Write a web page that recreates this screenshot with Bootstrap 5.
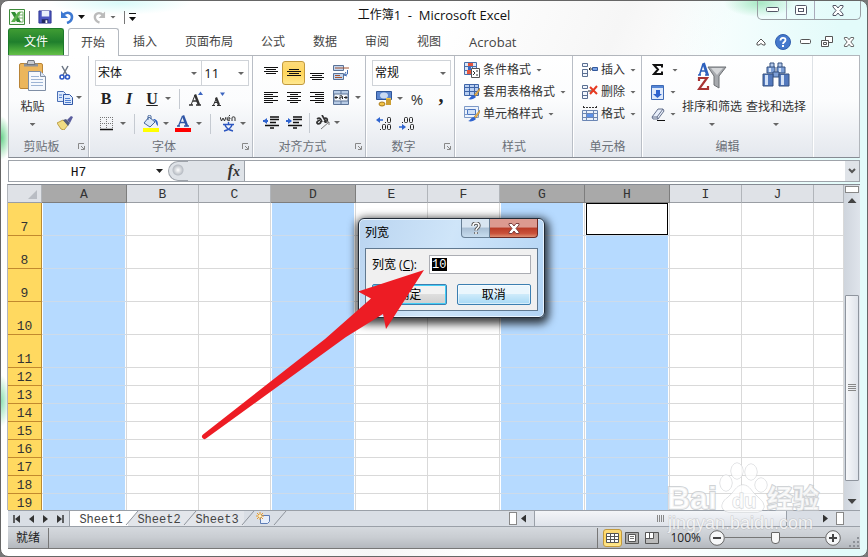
<!DOCTYPE html>
<html lang="zh-CN">
<head>
<meta charset="utf-8">
<meta name="viewport" content="width=device-width, initial-scale=1">
<title>工作簿1 - Microsoft Excel</title>
<link rel="stylesheet" href="https://cdn.jsdelivr.net/npm/bootstrap@5.3.0/dist/css/bootstrap.min.css">
<style>
body{background:#777;font:12px/16px "Open Sans","Noto Sans CJK SC",sans-serif;color:#333;min-height:100vh}
button,select,input{font:inherit;color:inherit}
button{background:none;border:0;padding:0}
svg{display:block;flex:none}
.win{height:100vh;min-height:420px;border:1px solid #666;border-radius:8px;padding:0 7px 7px;overflow:hidden;
  background:radial-gradient(ellipse 70px 12px at 120px 2px,#d9faf9,transparent),
  radial-gradient(ellipse 36px 14px at calc(100% - 107px) 2px,#a8e8c4,transparent),
  radial-gradient(ellipse 10px 22px at 0 137px,#67d18a,transparent),
  radial-gradient(ellipse 9px 26px at 0 400px,#8de0b2,transparent),
  linear-gradient(90deg,transparent 76%,#e3fbfa 97%),linear-gradient(115deg,#fff 40%,#f6f6f6 56%,#fff 66%)}
.lat{font-size:13px}
.titlebar{display:grid;grid-template-columns:1fr auto 1fr;height:27px;color:#111}
.quick{gap:4px;padding:4px 0 0 1px}
.tri{display:inline-block;flex:none;width:6px;height:3px;background:#666;clip-path:polygon(0 0,100% 0,50% 100%)}
.tri-dark{width:7px;height:4px;background:#111}
.vsep{width:1px;height:13px;background:#777;flex:none}
.vsoft{width:1px;height:20px;background:#c5cad1;flex:none}
.capbtns{border:1px solid #999fa3;border-top:0;border-radius:0 0 5px 5px;height:19px;margin-right:-1px}
.capbtns button{width:28px;display:flex;align-items:center;justify-content:center}
.capbtns button+button{border-left:1px solid #aab}
.capbtns button:last-child{width:46px}
.tabs{height:27px}
.tabs a{color:#444;padding:0 14px;display:flex;align-items:center;height:27px;text-decoration:none}
.tabs .file{width:56px;padding:0 0 0 15px;margin-right:4px;color:#fff;border:1px solid #1d7a2c;border-bottom:0;border-radius:3px 3px 0 0;background:linear-gradient(#3f9c33,#1f7f2d 50%,#47a83a 80%,#64bf48)}
.tabs .open{width:51px;padding:0 0 0 12px;background:#fff;border:1px solid #b4b9c0;border-bottom:0;border-radius:3px 3px 0 0;height:28px;position:relative}
.tabtools button{width:22px;display:flex;justify-content:center}
.ribbon{height:103px;border:1px solid #b2b6bc;border-bottom:1px solid #868b93;background:linear-gradient(#fff,#fbfcfd 45%,#e9ecf1 88%,#e3e8ee)}
.grp{display:flex;flex-direction:column;border-right:1px solid #b9bec6;box-shadow:1px 0 #fff;margin-right:1px;flex:none;padding:4px 3px 0 5px}
.grp.lists{padding:4px 0 0 8px}
.grp.lists>.cap{padding-right:8px}
.grp>.body{height:76px}
.grp>.cap{color:#6b7078;display:flex;justify-content:center;align-items:center;height:21px;position:relative}
.grp>.cap svg{position:absolute;right:0;top:7px}
.ib{display:flex;align-items:center;justify-content:center;flex:none;height:24px}
.w8{width:8px}.w10{width:10px}.w12{width:12px}.w14{width:14px}.w20{width:20px}.w22{width:22px}.w23{width:23px}.w24{width:24px}.w26{width:26px}
.row3{display:flex;align-items:center;height:25px}
.box{appearance:none;border:1px solid #cfd3d8;background:#fff url("data:image/svg+xml,%3Csvg xmlns='http://www.w3.org/2000/svg' width='6' height='3'%3E%3Cpath d='M0 0h6L3 3z' fill='%23666'/%3E%3C/svg%3E") no-repeat right 4px center;height:26px;border-radius:0;padding:0 2px;color:#111}
.on{background:linear-gradient(#fddb7b,#ffd65c 50%,#ffe88f);border:1px solid #c29a3d;border-radius:3px}
.stack{margin-top:-1px}
.cmd{display:flex;align-items:center;height:22px;gap:3px;white-space:nowrap}
.cmd .tri{margin-left:2px}
.gly{font-family:"Liberation Serif",serif;font-weight:700;color:#222;line-height:16px}
.pct{font-size:15px}
.big{display:flex;flex-direction:column;align-items:center;white-space:nowrap}
.paste{padding:0 8px 0 5px}
.fbar{height:22px;margin:2px 0;border:1px solid #9ea3aa;background:#dfe3e8}
.fbar input{border:0;background:#fff;outline:0;font:13px "Liberation Mono",monospace;color:#111;border-radius:0}
.fbar .namebox{width:159px;padding:2px 20px 0 0;text-align:center;background:#fff url("data:image/svg+xml,%3Csvg xmlns='http://www.w3.org/2000/svg' width='7' height='4'%3E%3Cpath d='M0 0h7L3.5 4z' fill='%23222'/%3E%3C/svg%3E") no-repeat right 5px center}
.fx{width:77px;border-right:1px solid #9ea3aa;background:linear-gradient(90deg,#fff 10px,transparent 10px)}
.fx .knob{width:20px;height:20px;border:1px solid #9ea3aa;border-right:0;border-radius:10px 0 0 10px;background:radial-gradient(circle at 9px 8px,#fff 0,#b9bec5 5px,#dfe3e8 6px)}
.fx i{font:italic 700 16px "Liberation Serif",serif}
.sheet{border-top:1px solid #868b93;border-left:1px solid #b2b6bc;margin-left:-1px;background:#fff;flex:1 1 0;min-height:0;overflow:hidden}
.cells{flex:1 1 0;min-width:0;overflow:hidden}
.cells table{table-layout:fixed;border-collapse:separate;border-spacing:0;width:100%;min-width:820px;font:13px/14px "Liberation Mono",monospace}
.cells thead th{height:18px;padding:2px 0 0;border-right:1px solid #b1b5ba;border-bottom:1px solid #9a9ea4;background:#dfe2e7;font-weight:400;text-align:center;vertical-align:bottom}
.cells thead th.sel{background:#a9a9a9;border-color:#7d7d7d}
.cells tbody th{background:#ffd960;border-right:1px solid #b98a35;border-bottom:1px solid #c2892e;padding:2px 0 0;font-weight:400;text-align:center;vertical-align:bottom}
.cells td{padding:0 1px;border-right:1px solid #d9d9d9;border-bottom:1px solid #d9d9d9}
.cells td.sel{background:#b6daff;border-bottom-color:#cddbea;box-shadow:inset 1px 0 #fff,inset -1px 0 #fff}
.tall{height:33px}.short{height:18px}
.active-cell{height:32px;border:1px solid #000;background:#fff}
.corner{display:block;width:9px;height:9px;margin:0 4px 3px auto;background:#b9bdc4;clip-path:polygon(100% 0,100% 100%,0 100%)}
.vbar{width:16px;background:linear-gradient(90deg,#cfd5dd,#dfe4eb);display:flex;flex-direction:column;align-items:center}
.vbar .split{width:14px;height:7px;margin:1px 0 5px;border:1px solid #888;background:#fff}
.up{width:9px;height:5px;background:#444;clip-path:polygon(50% 0,100% 100%,0 100%)}
.down{width:9px;height:5px;background:#444;clip-path:polygon(0 0,100% 0,50% 100%);margin-bottom:6px}
.vthumb{width:14px;flex:184 1 0;border:1px solid #8f959e;border-radius:1px;background:linear-gradient(90deg,#f7f8fa,#dfe3ea);display:flex;align-items:center;justify-content:center}
.strip{height:17px;background:#d9dee5;border-top:1px solid #9aa0a8;border-bottom:1px solid #9aa0a8}
.sheets{font:12px/14px "Liberation Mono",monospace}
.sheets button{height:15px;width:58px;color:#444;position:relative;text-align:center;padding:2px 0 0 4px;background:#e3e6eb}
.sheets .slash{position:absolute;right:-12px;top:0;z-index:2}
.navb{width:62px;border-right:1px solid #9aa0a8;height:15px}
.hbar{width:335px}
.hsplit{width:8px;height:13px;border:1px solid #888;background:#fff;flex:none}
.hthumb{flex:1 1 0;height:15px;border:1px solid #9aa0a8;border-top:0;border-bottom:0;background:linear-gradient(#f3f5f8,#dfe3ea)}
.lft{width:5px;height:8px;background:#333;clip-path:polygon(100% 0,100% 100%,0 50%);flex:none}
.rgt{width:5px;height:8px;background:#333;clip-path:polygon(0 0,100% 50%,0 100%);flex:none}
.status{height:22px;background:linear-gradient(#d5d9de,#c9cdd2 50%,#b4b8be);border-bottom:1px solid #777;color:#222;position:relative;padding-right:19px}
.status .vsep{height:20px}
.status label{line-height:14px}
.status .view{width:19px;height:18px;margin-left:5px}
.zoom{appearance:none;width:100px;height:16px;background:linear-gradient(#777,#777) center/100% 1px no-repeat;margin:0}
.zoom::-webkit-slider-thumb{appearance:none;width:9px;height:12px;background:#f8f8f8;border:1px solid #666;border-radius:1px 1px 4px 4px}
.dlg{position:absolute;left:357px;top:217px;width:187px;border:1px solid #222b36;border-radius:6px;padding:0 6px 6px;background:linear-gradient(110deg,#bcd6f1 5%,#cfe5f9 45%,#b2d4f5);box-shadow:inset 0 0 0 1px #e8f4ff,1px 3px 9px 3px rgba(0,0,0,.75)}
.dlg .head{height:29px;color:#000}
.dlg .head>:first-child{padding-bottom:2px}
.dlg .head button{height:19px;width:29px;border:1px solid #687f95;border-top:0;border-radius:0 0 0 4px;background:linear-gradient(#d8e5f1 45%,#a9bfd4 50%,#c7dcee);display:flex;align-items:center;justify-content:center}
.dlg .head .shut{width:48px;border-color:#6d2a25;border-left:0;border-radius:0 0 4px 0;background:linear-gradient(#dc9a90 45%,#b93b27 50%,#c9513a 80%,#de8f72)}
.dlg .pane{border:1px solid #60788f;background:#f0f0f0;padding:6px 6px 5px;color:#000}
.dlg label{width:57px}
.dlg input{flex:1 1 0;min-width:0;height:19px;border:1px solid #abadb3;border-radius:0;padding:0 2px;font:12px "Liberation Mono",monospace;color:#fff;background:linear-gradient(#000,#000) 2px 2px/15px 13px no-repeat,#fff;outline:0}
.dlg .acts{gap:10px;margin-top:10px}
.dlg .acts button{flex:1 1 0;height:21px;border:1px solid #3c7fb1;border-radius:2px;box-shadow:inset 0 0 0 1px #fff8;background:linear-gradient(#eaf6fd 45%,#cdeafa 50%,#a7d9f5)}
.dlg .acts .ok{background:linear-gradient(#f2f2f2 45%,#dedede 50%,#cfcfcf);box-shadow:inset 0 0 0 1px #43cdf5}
.pointer{position:absolute;left:199px;top:267px}
.wm{position:absolute;right:44px;bottom:16px;pointer-events:none}
</style>
</head>
<body>
<main class="win d-flex flex-column position-relative">
<header class="titlebar">
  <div class="quick d-flex align-items-center">
    <svg width="16" height="16" viewBox="0 0 16 16"><path d="M.5.5h15v15H.5z" fill="#f6fbf3" stroke="#3d8a3a"/><path d="M10 3h4v10h-4z" fill="#fff" stroke="#77b36d"/><path d="M10 6h4M10 9h4" stroke="#77b36d"/><path d="M2 3h4l6 10H8z" fill="#2f8b33"/><path d="M9 3h3L6 13H2z" fill="#5bb04c"/></svg>
    <span class="vsep"></span>
    <button class="ib ms-1" aria-label="保存"><svg width="14" height="14" viewBox="0 0 15 15"><path d="M1 1h13v13H1z" fill="#4c57c0" stroke="#2c3390"/><path d="M4 1h8v6H4z" fill="#e9f0fb"/><path d="M4 10h7v4H4z" fill="#222a60"/><path d="M8 11h2v3H8z" fill="#fff"/></svg></button>
    <button class="ib ms-1" aria-label="撤消"><svg width="14" height="14" viewBox="0 0 14 14"><path d="M3 5C7 1 12 3 12 7c0 3-2 5-5 6" fill="none" stroke="#3e79d2" stroke-width="2.6"/><path d="M1 1v7h7z" fill="#3e79d2"/></svg></button>
    <span class="tri tri-dark"></span>
    <button class="ib ms-1" aria-label="恢复"><svg width="13" height="14" viewBox="0 0 14 14"><path d="M11 5C7 1 2 3 2 7c0 3 2 5 5 6" fill="none" stroke="#bbb" stroke-width="2.6"/><path d="M13 1v7H6z" fill="#bbb"/></svg></button>
    <span class="tri"></span>
    <span class="vsep ms-1"></span>
    <button class="ib" aria-label="自定义"><svg width="7" height="8"><path d="M0 .5h7" stroke="#111"/><path d="M0 4h7L3.500 8z" fill="#111"/></svg></button>
  </div>
  <div class="d-flex align-items-center"><span>工作簿</span><span class="lat">1&nbsp; -&nbsp; Microsoft Excel</span></div>
  <div class="d-flex justify-content-end">
    <div class="capbtns d-flex">
      <button aria-label="最小化"><svg width="13" height="6"><rect x=".5" y=".5" width="12" height="4" rx="1" fill="#fff" stroke="#535666"/></svg></button>
      <button aria-label="最大化"><svg width="12" height="10"><rect x=".5" y=".5" width="11" height="9" rx="1" fill="#fff" stroke="#535666"/><rect x="3.500" y="3.500" width="5" height="3" fill="#fff" stroke="#535666"/></svg></button>
      <button aria-label="关闭"><svg width="12" height="11" viewBox="0 0 12 11"><path d="M1 .5h3l2 2.500 2-2.500h3v1.500L8 5.500 11 9v1.500H8l-2-2.500-2 2.500H1V9l3-3.500L1 2z" fill="#fff" stroke="#535666"/></svg></button>
    </div>
  </div>
</header>

<nav class="tabs d-flex" aria-label="功能区">
  <a class="file" href="#">文件</a><a class="open" href="#">开始</a><a href="#">插入</a><a href="#">页面布局</a><a href="#">公式</a><a href="#">数据</a><a href="#">审阅</a><a href="#">视图</a><a class="lat" href="#">Acrobat</a>
  <div class="tabtools ms-auto d-flex align-items-center">
    <button aria-label="折叠"><svg width="10" height="8" viewBox="0 0 10 8"><path d="M1 5l4-4 4 4v2H7L5 5.500 3 7H1z" fill="#fff" stroke="#555"/></svg></button>
    <button aria-label="帮助"><svg width="16" height="16" viewBox="0 0 16 16"><circle cx="8" cy="8" r="7.500" fill="#4478cc" stroke="#3260ad"/><path d="M5.500 6.500c0-3.500 5-3.500 5-.5 0 2-2.500 2-2.500 4" fill="none" stroke="#fff" stroke-width="1.800"/><path d="M7 11h2v2H7z" fill="#fff"/></svg></button>
    <button aria-label="最小化窗口"><svg width="11" height="5"><rect x=".5" y=".5" width="10" height="4" rx="1" fill="#fff" stroke="#555"/></svg></button>
    <button aria-label="还原窗口"><svg width="12" height="11"><path d="M4.500.5h7v6h-7z" fill="#fff" stroke="#555"/><path d="M.5 4.500h7v6h-7z" fill="#fff" stroke="#555"/><path d="M2.500 6.500h3v2h-3z" fill="none" stroke="#555"/></svg></button>
    <button aria-label="关闭窗口"><svg width="12" height="10" viewBox="0 0 12 11"><path d="M1 .5h3l2 2.500 2-2.500h3v1.500L8 5.500 11 9v1.500H8l-2-2.500-2 2.500H1V9l3-3.500L1 2z" fill="#fff" stroke="#555"/></svg></button>
  </div>
</nav>

<section class="ribbon d-flex">
  <div class="grp" style="width:80px">
    <div class="body d-flex">
      <button class="big paste"><svg width="27" height="31" viewBox="0 0 27 31"><rect x=".5" y="3.500" width="23" height="25" rx="1.500" fill="#ecb65c" stroke="#b98436"/><path d="M5 3.500h14v3H5z" fill="#8d9299"/><path d="M9 .5h6l1 4H8z" fill="#c8ccd2" stroke="#70757c"/><path d="M9.500 11.500h12l5 5v14h-17z" fill="#f6f9fd" stroke="#7f8ea5"/><path d="M21.500 11.500v5h5" fill="#dbe6f5" stroke="#7f8ea5"/><path d="M12 16.500h8M12 19.500h12M12 22.500h12M12 25.500h12" stroke="#9db4d4"/></svg><span class="mt-1 pt-1">粘贴</span><span class="tri mt-2"></span></button>
      <div>
        <div class="row3"><button class="ib w22" aria-label="剪切"><svg width="12" height="16" viewBox="0 0 12 16"><path d="M3 1l5 9M9 1l-5 9" stroke="#6a7483" stroke-width="1.500"/><circle cx="3" cy="12" r="2" fill="none" stroke="#2d58c4" stroke-width="1.600"/><circle cx="8.500" cy="12" r="2" fill="none" stroke="#2d58c4" stroke-width="1.600"/></svg></button></div>
        <div class="row3"><button class="ib w22" aria-label="复制"><svg width="16" height="14" viewBox="0 0 16 14"><path d="M.5.5h6l2 2v8h-8z" fill="#dce9fd" stroke="#4a6fb5"/><path d="M6.500 3.500h6l3 3v7h-9z" fill="#dce9fd" stroke="#2f56a5"/><path d="M2 4h3M2 6.500h3M8 7.500h5M8 9.500h6M8 11.500h6" stroke="#4f7fd0"/></svg></button><span class="tri"></span></div>
        <div class="row3"><button class="ib w22" aria-label="格式刷"><svg width="16" height="14" viewBox="0 0 16 14"><path d="M0 7l6-3 5 5-4 5-3-1z" fill="#f2dd83" stroke="#bda04a"/><path d="M6 4l3-1 4 4-2 3z" fill="#555e7d"/><path d="M10 4l4-4 2 1-3 6z" fill="#5a5d9e"/></svg></button></div>
      </div>
    </div>
    <div class="cap pe-3">剪贴板<svg width="7" height="7"><path d="M.5 6V.5H6M3 3l3 3M6.500 3v3.500H3" fill="none" stroke="#888"/></svg></div>
  </div>

  <div class="grp" style="width:163px">
    <div class="body">
      <div class="d-flex"><select class="box" aria-label="字体" style="width:108px"><option>宋体</option></select><select class="box border-start-0 lat" aria-label="字号" style="width:47px"><option>11</option></select></div>
      <div class="row3">
        <button class="ib w22 gly fs-6">B</button><button class="ib w24 gly fs-6 fst-italic">I</button><button class="ib w22 gly fs-6 text-decoration-underline">U</button><span class="ib w10"><span class="tri"></span></span><span class="ib w12"><span class="vsoft"></span></span>
        <button class="ib w22 gly" aria-label="增大字号"><svg width="15" height="15" viewBox="0 0 15 15"><path d="M0 14h4M7 14h5M4 10h5" stroke="#333" stroke-width="1.400"/><path d="M2 14L6 4" stroke="#333"/><path d="M6 3.500l4 10.500" stroke="#333" stroke-width="2.400"/><path d="M9 4l2.500-3.500L14 4z" fill="#3d66c0"/></svg></button>
        <button class="ib w22 gly" aria-label="减小字号"><svg width="15" height="14" viewBox="0 0 15 14"><path d="M1 13.500h3M6 13.500h4M3 10.500h4" stroke="#333" stroke-width="1.200"/><path d="M2.500 13L5.500 6" stroke="#333"/><path d="M5 5.500L8 13" stroke="#333" stroke-width="2.200"/><path d="M9 .5l2.500 3.500L14 .5z" fill="#3d66c0"/></svg></button>
      </div>
      <div class="row3">
        <button class="ib w24" aria-label="边框"><svg width="14" height="14"><path d="M.5 0v12M6.500 0v12M12.500 0v12M0 .5h13M0 6.500h13" stroke="#777" stroke-dasharray="1 1"/><path d="M0 12.500h13" stroke="#111" stroke-width="1.500"/></svg></button><span class="ib w8"><span class="tri"></span></span><span class="ib w14"><span class="vsoft"></span></span>
        <button class="ib w20" aria-label="填充颜色"><svg width="16" height="17" viewBox="0 0 16 17"><path d="M1 8l5-6 6 5-5 5z" fill="#dbe7f6" stroke="#46679c"/><path d="M5 5V1c0-1 3-1 3 0v3" fill="none" stroke="#46679c"/><path d="M10 4c4 0 5 2 5 7-2-1-2-4-3-5z" fill="#2f61c0"/><path d="M0 13h16v4H0z" fill="#ff0"/></svg></button><span class="ib w10"><span class="tri"></span></span>
        <button class="ib w24" aria-label="字体颜色"><svg width="16" height="17" viewBox="0 0 16 17"><path d="M2 11h3M9 11h5M5 7.500h6" stroke="#2f55a5" stroke-width="1.400"/><path d="M3.500 11L7.500 1" stroke="#2f55a5" stroke-width="1.200"/><path d="M8 .5L12 11" stroke="#2f55a5" stroke-width="2.400"/><path d="M0 13h16v4H0z" fill="#f00"/></svg></button><span class="ib w8"><span class="tri"></span></span><span class="ib w14"><span class="vsoft"></span></span>
        <button class="ib w22" aria-label="拼音"><svg width="17" height="17" viewBox="0 0 17 17"><path d="M0 2l1.500 4L3 3l1.500 3L6 2M7 4h3c0-3-3-2-3 0s2 2 3 1M9 1l1-1M12 6V2.500c1-1 3-1 3 .5v3" fill="none" stroke="#333"/><path d="M8.500 7v2M3 9.500h11M5 10c1 3 4 5 8 6M12 10c-1 3-4 5-8 6" fill="none" stroke="#2c56c0" stroke-width="1.400"/></svg></button><span class="ib w8"><span class="tri"></span></span>
      </div>
    </div>
    <div class="cap pe-3">字体<svg width="7" height="7"><path d="M.5 6V.5H6M3 3l3 3M6.500 3v3.500H3" fill="none" stroke="#888"/></svg></div>
  </div>

  <div class="grp" style="width:112px">
    <div class="body">
      <div class="row3">
        <button class="ib w23 pb-1" aria-label="顶端对齐"><svg width="14" height="8"><path d="M0 .5h14M2 2.500h10M0 4.500h14M2 6.500h10" stroke="#111"/></svg></button>
        <button class="ib w23 on" aria-label="垂直居中"><svg width="14" height="8"><path d="M2 .5h10M0 2.500h14M2 4.500h10M0 6.500h14" stroke="#111"/></svg></button>
        <button class="ib w23 pt-2" aria-label="底端对齐"><svg width="14" height="8"><path d="M0 .5h14M2 2.500h10M0 4.500h14M2 6.500h10" stroke="#111"/></svg></button>
        <button class="ib w26" aria-label="自动换行"><svg width="16" height="16" viewBox="0 0 16 16"><path d="M.5.500h10v5H.5zM.5 8.500h10v6H.5z" fill="#c3d5ee" stroke="#5a7296"/><path d="M2 3h14M2 10.500h5M2 12.500h7" stroke="#a65430" stroke-width="1"/><path d="M14.500 5v4l-3 1M13 7l-2 3 3 1" fill="none" stroke="#456fb3"/></svg></button>
      </div>
      <div class="row3">
        <button class="ib w23" aria-label="左对齐"><svg width="14" height="12"><path d="M0 .5h14M0 2.500h9M0 4.500h14M0 6.500h9M0 8.500h14M0 10.500h9" stroke="#111"/></svg></button>
        <button class="ib w23" aria-label="居中"><svg width="14" height="12"><path d="M0 .5h14M3 2.500h8M0 4.500h14M3 6.500h8M0 8.500h14M3 10.500h8" stroke="#111"/></svg></button>
        <button class="ib w23" aria-label="右对齐"><svg width="14" height="12"><path d="M0 .5h14M5 2.500h9M0 4.500h14M5 6.500h9M0 8.500h14M5 10.500h9" stroke="#111"/></svg></button>
        <button class="ib w26" aria-label="合并后居中"><svg width="16" height="15"><path d="M.5.5h15v14H.5z" fill="#b8cce6" stroke="#5a7296"/><path d="M8 .5v14" stroke="#5a7296"/><path d="M1 4h14v7H1z" fill="#f5f8fc" stroke="#5a7296"/><path d="M2 7.500h3M11 7.500h3M3.500 6L2 7.500 3.500 9M12.500 6L14 7.500 12.500 9M6.500 6c3-1 3 0 3 3M9.500 7c-4 0-4 2-1.500 2" fill="none" stroke="#222"/></svg></button><span class="ib w8"><span class="tri"></span></span>
      </div>
      <div class="row3">
        <button class="ib w23" aria-label="减少缩进"><svg width="16" height="13"><path d="M7 1h9M7 3.500h9M7 6.500h6M2 9.500h14M7 12h4" stroke="#111" stroke-width="1.600"/><path d="M0 5h5" stroke="#2f64cf" stroke-width="2"/><path d="M4 2v6L0 5z" fill="#2f64cf"/></svg></button>
        <button class="ib w23" aria-label="增加缩进"><svg width="16" height="13"><path d="M7 1h9M7 3.500h9M7 6.500h6M2 9.500h14M7 12h4" stroke="#111" stroke-width="1.600"/><path d="M0 5h5" stroke="#2f64cf" stroke-width="2"/><path d="M2 2v6l4-3z" fill="#2f64cf"/></svg></button>
        <span class="ib w8"><span class="vsoft"></span></span>
        <button class="ib w20" aria-label="方向"><svg width="16" height="15" viewBox="0 0 16 15"><path d="M2 4c3-2 4 0 5 3M5 5c-3 1-4 3-2 4 2 0 3-1 3-3M7 0l4 7M9 4c2-2 4 0 3 2s-2 1-3 0" fill="none" stroke="#333" stroke-width="1.700"/><path d="M6 14l8-7M14 10V7h-3" fill="none" stroke="#777"/></svg></button><span class="ib w8"><span class="tri"></span></span>
      </div>
    </div>
    <div class="cap pe-3">对齐方式<svg width="7" height="7"><path d="M.5 6V.5H6M3 3l3 3M6.500 3v3.500H3" fill="none" stroke="#888"/></svg></div>
  </div>

  <div class="grp" style="width:88px">
    <div class="body">
      <select class="box w-100 d-block" aria-label="数字格式"><option>常规</option></select>
      <div class="row3">
        <button class="ib w24" aria-label="会计数字格式"><svg width="17" height="16" viewBox="0 0 17 16"><path d="M.5.5h15v8H.5z" fill="#5b86cf" stroke="#2f5597"/><ellipse cx="8" cy="4.500" rx="4" ry="3" fill="#c9daf3"/><path d="M10 7h5v7h-5z" fill="#f0c348"/><path d="M10 9h5M10 11h5M10 13h5" stroke="#a87a1c"/><ellipse cx="6" cy="13" rx="3" ry="2" fill="#f0c348" stroke="#a87a1c"/></svg></button><span class="ib w8"><span class="tri"></span></span>
        <button class="ib w26 pct">%</button><button class="ib w22 gly fs-5 pb-2">,</button>
      </div>
      <div class="row3">
        <button class="ib w24" aria-label="增加小数位数"><svg width="16" height="15" viewBox="0 0 16 15"><path d="M2 4h5" stroke="#2f64cf" stroke-width="1.500"/><path d="M4 1v6L0 4z" fill="#2f64cf"/><g fill="none" stroke="#222"><path d="M9.500 6v1"/><rect x="11.500" y="1.500" width="3" height="5" rx="1"/><path d="M4.500 13v1"/><rect x="6.500" y="8.500" width="3" height="5" rx="1"/><rect x="11.500" y="8.500" width="3" height="5" rx="1"/></g></svg></button>
        <button class="ib w22" aria-label="减少小数位数"><svg width="16" height="15" viewBox="0 0 16 15"><path d="M0 11h5" stroke="#2f64cf" stroke-width="1.500"/><path d="M3 8v6l4-3z" fill="#2f64cf"/><g fill="none" stroke="#222"><path d="M3.500 6v1"/><rect x="5.500" y="1.500" width="3" height="5" rx="1"/><rect x="10.500" y="1.500" width="3" height="5" rx="1"/><path d="M9.500 13v1"/><rect x="11.500" y="8.500" width="3" height="5" rx="1"/></g></svg></button>
      </div>
    </div>
    <div class="cap pe-3">数字<svg width="7" height="7"><path d="M.5 6V.5H6M3 3l3 3M6.500 3v3.500H3" fill="none" stroke="#888"/></svg></div>
  </div>

  <div class="grp lists" style="width:117px">
    <div class="body"><div class="stack">
      <button class="cmd"><svg width="16" height="16"><path d="M.5.5h12v12H.5z" fill="#dce8f8" stroke="#4a6ea9"/><path d="M.5 4.500h12M.5 8.500h12M4.500.5v12M8.500.5v12" stroke="#4a6ea9"/><path d="M4 1h5v3H4zM3 8h4v4H3z" fill="#e4553d"/><path d="M4 5h3v3H4z" fill="#3568c9"/><path d="M7.500 6.500h8v9h-8z" fill="#fff" stroke="#555"/><path d="M9 9l2 2-2 2M12 9h2M12 13h2" fill="none" stroke="#333"/></svg>条件格式<span class="tri"></span></button>
      <button class="cmd"><svg width="16" height="16"><path d="M.5.5h14v11H.5z" fill="#b9cff1" stroke="#3d64a8"/><path d="M.5 3.500h14M.5 7.500h14M5.500.5v11M10.500.5v11" stroke="#3d64a8"/><path d="M16 4l-6 7 2 1 4-6z" fill="#efb24b" stroke="#8a6a2a" stroke-width=".5"/><path d="M4 15c2 0 3-4 6-4l2 2c-2 2-5 3-8 2z" fill="#2f64cf"/></svg>套用表格格式<span class="tri"></span></button>
      <button class="cmd"><svg width="16" height="16"><path d="M.5.5h14v11H.5z" fill="#edf3fc" stroke="#7d99c7"/><path d="M3.500 3.500h8v5h-8z" fill="#cfe0f8" stroke="#4a74c0"/><path d="M.5 3.500h3M.5 8.500h3" stroke="#7d99c7"/><path d="M16 4l-6 7 2 1 4-6z" fill="#efb24b" stroke="#8a6a2a" stroke-width=".5"/><path d="M4 15c2 0 3-4 6-4l2 2c-2 2-5 3-8 2z" fill="#2f64cf"/></svg>单元格样式<span class="tri"></span></button>
    </div></div>
    <div class="cap">样式</div>
  </div>

  <div class="grp lists" style="width:68px">
    <div class="body"><div class="stack">
      <button class="cmd"><svg width="16" height="15"><path d="M.5.5h5v3h-5zM.5 6.500h5v7h-5zM.5 10.500h5" fill="#f2f6fc" stroke="#5a6f92"/><path d="M7 6h4M8.500 4.500L7 6l1.500 1.500" fill="none" stroke="#222"/><path d="M10.500 4.500h5v3h-5z" fill="#7aa4e8" stroke="#34599b"/></svg>插入<span class="tri"></span></button>
      <button class="cmd"><svg width="16" height="15"><path d="M.5.5h5v3h-5zM.5 6.500h5v7h-5zM.5 10.500h5" fill="#f2f6fc" stroke="#5a6f92"/><path d="M6 6h4" stroke="#222"/><path d="M8 2l7 7M15 1L8 9" stroke="#e63a22" stroke-width="2"/></svg>删除<span class="tri"></span></button>
      <button class="cmd"><svg width="16" height="16"><path d="M1 1.500h14M1.500 0v3M14.500 0v3" stroke="#333" stroke-dasharray="2 1"/><path d="M.5 4.500h15v10H.5z" fill="#eaf1fb" stroke="#6b86b4"/><path d="M4.500 4v11M11.500 4v11M0 7.500h15M0 11.500h15" stroke="#6b86b4"/><path d="M5 8h6v3H5z" fill="#5d92ea"/></svg>格式<span class="tri"></span></button>
    </div></div>
    <div class="cap">单元格</div>
  </div>

  <div class="grp lists border-end" style="width:170px">
    <div class="body d-flex">
      <div class="stack">
        <button class="cmd" aria-label="求和"><svg width="16" height="12" viewBox="0 0 16 12"><path d="M11 3.500V1H3l4 4.500-4 4.500h8V7.500" fill="none" stroke="#111" stroke-width="2"/></svg><span class="tri"></span></button>
        <button class="cmd" aria-label="填充"><svg width="14" height="15"><path d="M.5.5h12v14H.5z" fill="#dfeafb" stroke="#3f6bb5"/><path d="M1 1h11v2H1z" fill="#5586d6"/><path d="M5 5h4v4h2l-4.500 4L2 9h3z" fill="#2f64cf"/></svg><span class="tri"></span></button>
        <button class="cmd" aria-label="清除"><svg width="14" height="13" viewBox="0 0 14 13"><path d="M1 9l6-8h5l1 2-6 8H2z" fill="#e9effa" stroke="#64708c"/><path d="M1 9h5l6-8M6 9l1 2" fill="none" stroke="#64708c"/><path d="M6 12.500h8" stroke="#111"/></svg><span class="tri"></span></button>
      </div>
      <button class="big ms-1"><svg width="30" height="31" viewBox="0 -2 30 31"><path d="M11 5h18l-7 9v12l-5-3v-9z" fill="#a6a9ad" stroke="#6d7074"/><path d="M14 6h12l-6 7z" fill="#d5d7d9"/><path d="M1 13h3M8 13h4M4 9h5M2.500 13L6 2" fill="none" stroke="#2e61bd" stroke-width="1.600"/><path d="M6.500 1l4 12" stroke="#2e61bd" stroke-width="2.800"/><path d="M2 19v-3h8L2 27h9v-3" fill="none" stroke="#a83434" stroke-width="2.200"/></svg><span class="mt-1 pt-1">排序和筛选</span><span class="tri mt-2"></span></button>
      <button class="big ms-1"><svg width="28" height="31" viewBox="0 0 28 31"><g stroke="#35507f"><path d="M8 3h4v5H8zM16 3h4v5h-4z" fill="#b6cbec"/><path d="M5 7h8v6H5zM15 7h8v6h-8z" fill="#7d9fd6"/><path d="M11 12h6v5h-6z" fill="#7d9fd6"/><path d="M1 14h10v12H1zM17 14h10v12H17z" fill="#5379bd"/></g><path d="M3 15h3v10H3zM19 15h3v10h-3zM7 8h2v4H7zM17 8h2v4h-2z" fill="#d4e2f6"/></svg><span class="mt-1 pt-1">查找和选择</span><span class="tri mt-2"></span></button>
    </div>
    <div class="cap">编辑</div>
  </div>
</section>

<section class="fbar d-flex">
  <input class="namebox" aria-label="名称框" value="H7">
  <div class="fx d-flex align-items-center justify-content-between pe-1"><span class="knob"></span><i>f<small>x</small></i></div>
  <input class="flex-grow-1" aria-label="编辑栏">
  <button class="ib w14 h-100" aria-label="展开编辑栏"><svg width="8" height="6"><path d="M1 1l3 3 3-3" fill="none" stroke="#555" stroke-width="2"/></svg></button>
</section>

<section class="sheet d-flex">
  <div class="cells">
    <table><colgroup id="widths"></colgroup><thead><tr id="letters"></tr></thead><tbody id="rows"></tbody></table>
  </div>
  <div class="vbar">
    <span class="split"></span><span class="up"></span>
    <span style="flex:92 1 0"></span>
    <div class="vthumb"><svg width="8" height="8"><path d="M0 .5h8M0 2.500h8M0 4.500h8M0 6.500h8" stroke="#888"/></svg></div>
    <span style="flex:18 1 0"></span><span class="down"></span>
  </div>
</section>

<section class="strip d-flex">
  <div class="navb d-flex align-items-center justify-content-around">
    <button aria-label="首张"><svg width="7" height="8"><path d="M1 0v8" stroke="#333" stroke-width="1.500"/><path d="M7 0v8L2 4z" fill="#333"/></svg></button><button aria-label="上一张"><svg width="5" height="8"><path d="M5 0v8L0 4z" fill="#333"/></svg></button><button aria-label="下一张"><svg width="5" height="8"><path d="M0 0v8l5-4z" fill="#333"/></svg></button><button aria-label="末张"><svg width="7" height="8"><path d="M6 0v8" stroke="#333" stroke-width="1.500"/><path d="M0 0v8l5-4z" fill="#333"/></svg></button>
  </div>
  <div class="sheets d-flex">
    <button class="bg-white">Sheet1<svg class="slash" width="16" height="15"><path d="M0 0h14L2 14H0z" fill="#fff"/><path d="M14 0L2 14" stroke="#8d939b"/></svg></button>
    <button>Sheet2<svg class="slash" width="16" height="15"><path d="M14 0L2 14" stroke="#8d939b"/></svg></button>
    <button>Sheet3<svg class="slash" width="16" height="15"><path d="M14 0L2 14" stroke="#8d939b"/></svg></button>
    <button class="bg-transparent p-0" style="width:32px" aria-label="插入工作表"><svg class="ms-auto" width="20" height="13"><path d="M4.500 3.500h9v6l-2 2h-7z" fill="#e7effb" stroke="#5e7db5"/><path d="M4 0v8M0 4h8M1 1l6 6M7 1L1 7" stroke="#e89a28"/><circle cx="4" cy="4" r="1.500" fill="#fff3c0"/></svg><svg class="slash" width="16" height="15"><path d="M14 0L2 14" stroke="#8d939b"/></svg></button>
  </div>
  <div class="hbar d-flex align-items-center ms-auto me-3">
    <span class="hsplit"></span><span class="lft ms-1"></span><span class="ms-2 hthumb d-flex align-items-center justify-content-center"><svg width="8" height="7"><path d="M.5 0v7M2.500 0v7M4.500 0v7M6.500 0v7" stroke="#888"/></svg></span><span class="ms-4 ps-2"></span><span class="rgt mx-1"></span><span class="hsplit ms-1"></span>
  </div>
</section>

<footer class="status d-flex align-items-center">
  <span class="ps-2">就绪</span><span class="vsep ms-2"></span>
  <span class="vsep ms-auto"></span>
  <button class="ib on view" aria-label="普通"><svg width="13" height="10"><path d="M.5.5h12v9H.5zM.5 3.500h12M.5 6.500h12M4.500 0v10M8.500 0v10" fill="#fff" stroke="#555"/></svg></button>
  <button class="ib w20" aria-label="页面布局"><svg width="14" height="12"><path d="M.5.5h13v11H.5z" fill="#aaa" stroke="#555"/><path d="M3.500 2.500h7v7h-7z" fill="#fff" stroke="#555"/><path d="M5 4.500h4M5 6.500h4" stroke="#777"/></svg></button>
  <button class="ib w20" aria-label="分页预览"><svg width="14" height="12"><path d="M.5.5h13v11H.5z" fill="#bbb" stroke="#555"/><path d="M1 1h3v6H1zM5 1h3v6H5z" fill="#fff"/><path d="M4.500.5v6M8.500.5v6h-8" fill="none" stroke="#555"/></svg></button>
  <label class="ms-2" for="zoom">100%</label>
  <button class="ib ms-2" aria-label="缩小"><svg width="16" height="16"><circle cx="8" cy="8" r="7.300" fill="#f6f7f8" stroke="#666"/><path d="M4 8h8" stroke="#444" stroke-width="2"/></svg></button>
  <input class="zoom" id="zoom" type="range" min="0" max="100" value="50">
  <button class="ib" aria-label="放大"><svg width="16" height="16"><circle cx="8" cy="8" r="7.300" fill="#f6f7f8" stroke="#666"/><path d="M4 8h8M8 4v8" stroke="#444" stroke-width="2"/></svg></button>
  <svg class="position-absolute end-0 bottom-0" width="12" height="12"><path d="M9 1h2v2H9zM5 5h2v2H5zM9 5h2v2H9zM1 9h2v2H1zM5 9h2v2H5zM9 9h2v2H9z" fill="#8d9197"/></svg>
</footer>

<form class="dlg" role="dialog" aria-label="列宽">
  <div class="head d-flex justify-content-between"><span class="align-self-center">列宽</span>
    <span class="d-flex"><button type="button" aria-label="帮助"><svg width="10" height="13" viewBox="0 0 10 13"><path d="M2 4c0-4 6-4 6-.5C8 6 5 6 5 8.500M5 10v2" fill="none" stroke="#555" stroke-width="3.400"/><path d="M2 4c0-4 6-4 6-.5C8 6 5 6 5 8.500M5 10v2" fill="none" stroke="#fff" stroke-width="1.600"/></svg></button><button type="button" class="shut" aria-label="关闭"><svg width="12" height="11" viewBox="0 0 12 11"><path d="M1 .5h3l2 2.500 2-2.500h3v1.500L8 5.500 11 9v1.500H8l-2-2.500-2 2.500H1V9l3-3.500L1 2z" fill="#fff" stroke="#7d4040"/></svg></button></span></div>
  <div class="pane">
    <div class="d-flex align-items-center"><label for="cw">列宽 (<u>C</u>):</label><input id="cw" value="10"></div>
    <div class="acts d-flex"><button type="button" class="ok">确定</button><button type="button">取消</button></div>
  </div>
</form>

<svg class="pointer" width="226" height="174" viewBox="200 268 226 174"><path d="M424 270L358 291.500l13 7L325 339 203 434.500a2.500 2.500 0 0 0 3 4L346 337l37-23 3 15z" fill="#ed1c24"/></svg>

<svg class="wm" width="156" height="78" viewBox="666 462 156 78" font-family="Liberation Sans, Noto Sans CJK SC, sans-serif" fill="#fff" fill-opacity=".75" stroke="#c4c7cb" stroke-opacity=".8" paint-order="stroke">
  <g font-weight="700"><text x="666" y="509" font-size="32" stroke-width="2">Bai</text><text x="766" y="508" font-size="26" stroke-width="2">经验</text></g>
  <path d="M742 485c7 0 9 8 16 13 7 6 7 14-3 14-7 0-19 0-26 0-10 0-10-9-3-14 7-5 9-13 16-13z"/>
  <ellipse cx="725" cy="483" rx="6" ry="8"/><ellipse cx="736" cy="471" rx="6" ry="8"/><ellipse cx="750" cy="472" rx="6" ry="8"/><ellipse cx="760" cy="485" rx="6" ry="7"/>
  <text x="731" y="508" font-size="20" font-weight="700">du</text>
  <text x="667" y="529" font-size="18" stroke="#aaa" stroke-opacity=".5">jingyan.baidu.com</text>
</svg>
</main>
<script>
const wide = 85, normal = 72;
const columns = [['A',1],['B',0],['C',0],['D',1],['E',0],['F',0],['G',1],['H',1],['I',0],['J',0],['',0]];
document.getElementById('widths').innerHTML = '<col style="width:34px">' +
  columns.map(([n, s]) => n ? `<col style="width:${s ? wide : normal}px">` : '<col>').join('');
document.getElementById('letters').innerHTML = '<th><span class="corner"></span></th>' +
  columns.map(([n, s]) => `<th scope="col" class="${s ? 'sel' : ''}">${n}</th>`).join('');
let html = '';
for (let r = 7; r <= 19; r++) {
  html += `<tr class="${r < 12 ? 'tall' : 'short'}"><th scope="row">${r}</th>` + columns.map(([n, s]) =>
    `<td class="${s ? 'sel' : ''}">${n === 'H' && r === 7 ? '<div class="active-cell"></div>' : ''}</td>`).join('') + '</tr>';
}
document.getElementById('rows').innerHTML = html;
</script>
<script src="https://cdn.jsdelivr.net/npm/bootstrap@5.3.0/dist/js/bootstrap.bundle.min.js"></script>
</body>
</html>
